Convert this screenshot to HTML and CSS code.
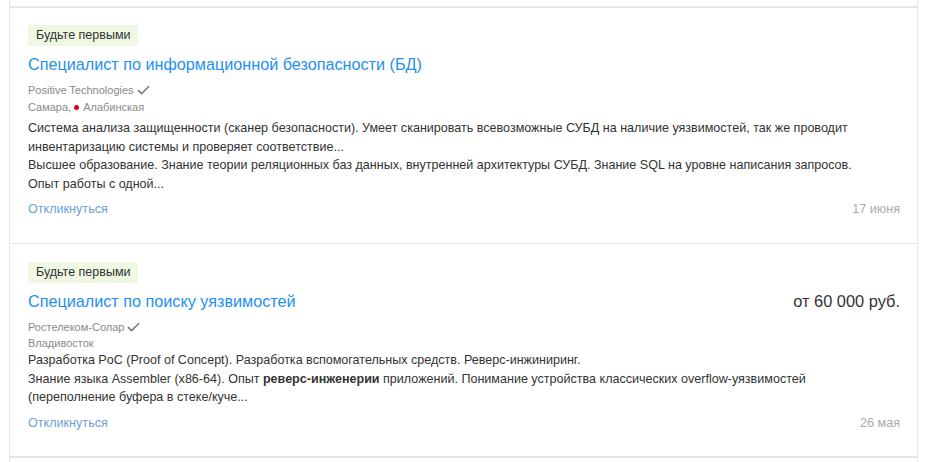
FILE: index.html
```html
<!DOCTYPE html>
<html lang="ru">
<head>
<meta charset="utf-8">
<link rel="stylesheet" href="styles.css">
</head>
<body>
<div class="list">
  <div class="item">
    <span class="badge">Будьте первыми</span>
    <div class="head">
      <a class="title" href="#">Специалист по информационной безопасности (БД)</a>
    </div>
    <div class="company">Positive Technologies
      <svg class="check" width="13" height="10" viewBox="0 0 13 10"><path d="M1 5.2 L4.6 8.6 L12 1.2" fill="none" stroke="#7a7a7a" stroke-width="1.6"/></svg>
    </div>
    <div class="city city-metro">Самара, <span class="metro"></span>Алабинская</div>
    <div class="desc">
      <div>Система анализа защищенности (сканер безопасности). Умеет сканировать всевозможные СУБД на наличие уязвимостей, так же проводит инвентаризацию системы и проверяет соответствие...</div>
      <div>Высшее образование. Знание теории реляционных баз данных, внутренней архитектуры СУБД. Знание SQL на уровне написания запросов. Опыт работы с одной...</div>
    </div>
    <div class="foot">
      <a class="respond" href="#">Откликнуться</a>
      <span class="date">17 июня</span>
    </div>
  </div>
  <div class="item">
    <span class="badge">Будьте первыми</span>
    <div class="head">
      <a class="title" href="#">Специалист по поиску уязвимостей</a>
      <span class="salary">от 60 000 руб.</span>
    </div>
    <div class="company">Ростелеком-Солар
      <svg class="check" width="13" height="10" viewBox="0 0 13 10"><path d="M1 5.2 L4.6 8.6 L12 1.2" fill="none" stroke="#7a7a7a" stroke-width="1.6"/></svg>
    </div>
    <div class="city">Владивосток</div>
    <div class="desc">
      <div>Разработка PoC (Proof of Concept). Разработка вспомогательных средств. Реверс-инжиниринг.</div>
      <div>Знание языка Assembler (x86-64). Опыт <b>реверс-инженерии</b> приложений. Понимание устройства классических overflow-уязвимостей (переполнение буфера в стеке/куче...</div>
    </div>
    <div class="foot">
      <a class="respond" href="#">Откликнуться</a>
      <span class="date">26 мая</span>
    </div>
  </div>
</div>
</body>
</html>
```

FILE: styles.css
```css
html, body {
  margin: 0;
  padding: 0;
  background: #fff;
}
body {
  font-family: "Liberation Sans", Arial, sans-serif;
  color: #333;
}
.list {
  margin-left: 9px;
  width: 909px;
  border-left: 1px solid #e8e8e8;
  border-right: 1px solid #e8e8e8;
  padding-top: 6px;
  min-height: 462px;
  box-sizing: border-box;
}
.item {
  border-top: 2px solid #e6e6e6;
  padding: 17px 17px 25px 18px;
  display: flex;
  flex-direction: column;
  align-items: flex-start;
}
.item + .item {
  border-top: 1px solid #e6e6e6;
  padding-top: 18px;
  padding-bottom: 24px;
  border-bottom: 2px solid #e6e6e6;
}
.badge {
  background: #eef8e2;
  color: #333;
  font-size: 12.5px;
  line-height: 21px;
  padding: 0 8px;
  border-radius: 3px;
}
.head {
  align-self: stretch;
  display: flex;
  justify-content: space-between;
  align-items: baseline;
  margin-top: 6px;
  height: 24px;
}
.title {
  color: #1e90f0;
  font-size: 16.2px;
  line-height: 24px;
  text-decoration: none;
}
.salary {
  font-size: 16.4px;
  line-height: 24px;
  color: #333;
}
.company {
  margin-top: 6px;
  font-size: 11px;
  line-height: 16px;
  color: #8a8a8a;
  display: flex;
  align-items: center;
  gap: 3px;
}
.check {
  display: block;
}
.city {
  font-size: 11px;
  line-height: 16px;
  color: #8a8a8a;
  display: flex;
  align-items: center;
}
.city-metro {
  padding: 1px 0 4px;
}
.metro {
  width: 5px;
  height: 5px;
  border-radius: 50%;
  background: #d6001c;
  margin: 0 4px 0 3px;
}
.desc {
  max-width: 835px;
  font-size: 12.55px;
  line-height: 18.5px;
  color: #333;
}
.desc b {
  font-weight: bold;
}
.foot {
  align-self: stretch;
  display: flex;
  justify-content: space-between;
  margin-top: 7px;
  font-size: 12.6px;
  line-height: 18px;
}
.respond {
  color: #6c9fd6;
  text-decoration: none;
}
.date {
  color: #aaa;
}
```
